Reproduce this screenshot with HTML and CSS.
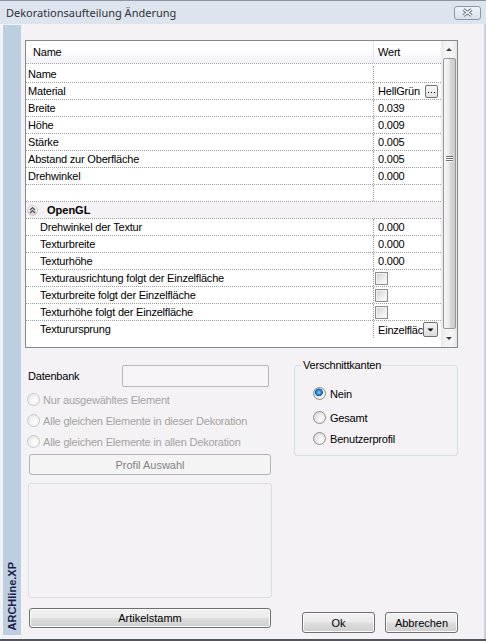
FILE: index.html
```html
<!DOCTYPE html>
<html>
<head>
<meta charset="utf-8">
<title>Dekorationsaufteilung Änderung</title>
<link rel="stylesheet" href="styles.css">
</head>
<body>
<div class="window">
  <div class="titlebar">
    <span class="title">Dekorationsaufteilung Änderung</span>
    <span class="close">
      <svg width="13" height="9" viewBox="0 0 13 9"><path d="M2.5 1.5 L10.5 7.5 M10.5 1.5 L2.5 7.5" stroke="#5b6d82" stroke-width="3.2" fill="none"/><path d="M2.5 1.5 L10.5 7.5 M10.5 1.5 L2.5 7.5" stroke="#ffffff" stroke-width="1.5" fill="none"/></svg>
    </span>
  </div>
  <div class="frame">
    <div class="sidebar"><span class="brand">ARCHline.XP</span></div>
    <div class="content">
      <div class="grid">
        <div class="table">
          <div class="head"><div class="hname">Name</div><div class="hval">Wert</div></div>
          <div class="row"><div class="n">Name</div><div class="v"></div></div>
          <div class="row"><div class="n">Material</div><div class="v btnv"><span class="vt">HellGrün</span><span class="dots"><svg width="11" height="11" viewBox="0 0 11 11"><rect x="2" y="6" width="1" height="1" fill="#000"/><rect x="5" y="6" width="1" height="1" fill="#000"/><rect x="8" y="6" width="1" height="1" fill="#000"/></svg></span></div></div>
          <div class="row"><div class="n">Breite</div><div class="v">0.039</div></div>
          <div class="row"><div class="n">Höhe</div><div class="v">0.009</div></div>
          <div class="row"><div class="n">Stärke</div><div class="v">0.005</div></div>
          <div class="row"><div class="n">Abstand zur Oberfläche</div><div class="v">0.005</div></div>
          <div class="row"><div class="n">Drehwinkel</div><div class="v">0.000</div></div>
          <div class="row"><div class="n"></div><div class="v"></div></div>
          <div class="group">
            <svg class="gicon" width="11" height="11" viewBox="0 0 11 11"><defs><linearGradient id="gg" x1="0" y1="0" x2="0" y2="1"><stop offset="0" stop-color="#fdfdfd"/><stop offset="1" stop-color="#d4d4d4"/></linearGradient></defs><circle cx="5.5" cy="5.5" r="5" fill="url(#gg)" stroke="#d0d0d0" stroke-width="1"/><path d="M3 5 L5.5 2.6 L8 5 M3 8 L5.5 5.6 L8 8" stroke="#505050" stroke-width="1.3" fill="none"/></svg>
            <span>OpenGL</span>
          </div>
          <div class="row sub"><div class="n">Drehwinkel der Textur</div><div class="v">0.000</div></div>
          <div class="row sub"><div class="n">Texturbreite</div><div class="v">0.000</div></div>
          <div class="row sub"><div class="n">Texturhöhe</div><div class="v">0.000</div></div>
          <div class="row sub"><div class="n">Texturausrichtung folgt der Einzelfläche</div><div class="v cbv"><span class="cb"></span></div></div>
          <div class="row sub"><div class="n">Texturbreite folgt der Einzelfläche</div><div class="v cbv"><span class="cb"></span></div></div>
          <div class="row sub"><div class="n">Texturhöhe folgt der Einzelfläche</div><div class="v cbv"><span class="cb"></span></div></div>
          <div class="row sub last"><div class="n">Texturursprung</div><div class="v btnv"><span class="vt">Einzelfläche</span><span class="drop"><svg width="13" height="13" viewBox="0 0 13 13"><path d="M3.5 5.5 L9.5 5.5 L6.5 8.5 Z" fill="#000"/></svg></span></div></div>
        </div>
        <div class="scroll">
          <div class="sarrow"><svg width="16" height="17" viewBox="0 0 16 17"><path d="M5 10 L11 10 L8 7 Z" fill="#3c3c3c"/></svg></div>
          <div class="thumb"><div class="grip"></div></div>
          <div class="sarrow down"><svg width="16" height="18" viewBox="0 0 16 18"><path d="M5 8 L11 8 L8 11 Z" fill="#3c3c3c"/></svg></div>
        </div>
      </div>
      <div class="lower">
        <div class="left">
          <div class="dbrow"><span class="dblabel">Datenbank</span><span class="dbinput"></span></div>
          <div class="radios">
            <div class="rrow dis"><span class="radio off"></span>Nur ausgewähltes Element</div>
            <div class="rrow dis"><span class="radio off"></span>Alle gleichen Elemente in dieser Dekoration</div>
            <div class="rrow dis"><span class="radio off"></span>Alle gleichen Elemente in allen Dekoration</div>
          </div>
          <div class="button disabled wide">Profil Auswahl</div>
          <div class="emptybox"></div>
          <div class="button wide artikel">Artikelstamm</div>
        </div>
        <div class="right">
          <fieldset class="gbox">
            <legend>Verschnittkanten</legend>
            <div class="vlist">
              <div class="rrow"><span class="radio on"></span>Nein</div>
              <div class="rrow gap"><span class="radio"></span>Gesamt</div>
              <div class="rrow"><span class="radio"></span>Benutzerprofil</div>
            </div>
          </fieldset>
          <div class="actions">
            <div class="button small">Ok</div>
            <div class="button small">Abbrechen</div>
          </div>
        </div>
      </div>
    </div>
  </div>
</div>
</body>
</html>
```

FILE: styles.css
```css
* { box-sizing: border-box; }
html, body { margin: 0; padding: 0; }
body {
  width: 486px;
  height: 641px;
  overflow: hidden;
  font-family: "Liberation Sans", Arial, sans-serif;
  font-size: 11px;
  letter-spacing: -0.2px;
  color: #000;
  background: #f5f2f5;
}
.window {
  width: 486px;
  height: 641px;
  display: flex;
  flex-direction: column;
  border-bottom: 2px solid #50565e;
}
.titlebar {
  height: 24px;
  flex: none;
  display: flex;
  align-items: center;
  justify-content: space-between;
  padding: 0 5px 0 6px;
  background: #dce4ed;
  border-top: 1px solid #8a96a4;
}
.title {
  font-family: "Noto Sans", "Open Sans", sans-serif;
  font-size: 11px;
  letter-spacing: 0;
  color: #2e3238;
}
.close {
  width: 27px;
  height: 14px;
  border: 1px solid #8897a8;
  border-radius: 3px;
  background: linear-gradient(#f0f4f8, #d8e0e9);
  display: flex;
  align-items: center;
  justify-content: center;
}
.frame {
  flex: 1;
  display: flex;
  border-right: 2px solid #c4d4e4;
}
.sidebar {
  width: 18px;
  flex: none;
  margin: 1px 0 4px 3px;
  background: #bccfe0;
  display: flex;
  flex-direction: column;
  justify-content: flex-end;
  align-items: center;
  padding-bottom: 5px;
}
.brand {
  writing-mode: vertical-rl;
  transform: rotate(180deg);
  font-weight: bold;
  font-size: 11px;
  letter-spacing: 0;
  color: #1c1d45;
}
.content {
  flex: 1;
  display: flex;
  flex-direction: column;
  padding: 16px 0 0 4px;
}
.grid {
  width: 433px;
  height: 308px;
  flex: none;
  border: 1px solid #828790;
  background: #fff;
  display: flex;
}
.table { width: 415px; }
.head {
  height: 23px;
  display: flex;
  border-bottom: 1px dotted #a0a0a0;
  background: linear-gradient(#ffffff, #ffffff 40%, #f2f1f8);
  margin-bottom: 2px;
}
.hname { width: 347px; padding-left: 7px; line-height: 22px; }
.hval { flex: 1; padding-left: 4px; line-height: 22px; border-left: 1px solid #e4e4ea; }
.row {
  height: 17px;
  display: flex;
  border-bottom: 1px dotted #a0a0a0;
}
.row.last { border-bottom: none; }
.n {
  width: 347px;
  flex: none;
  padding-left: 2px;
  line-height: 16px;
  white-space: nowrap;
  overflow: hidden;
}
.sub .n { padding-left: 14px; }
.v {
  flex: 1;
  min-width: 0;
  border-left: 1px dotted #a0a0a0;
  padding-left: 4px;
  line-height: 16px;
  display: flex;
  align-items: center;
  white-space: nowrap;
  overflow: hidden;
}
.btnv { padding-right: 3px; }
.vt { flex: 1; min-width: 0; overflow: hidden; }
.cbv { padding-left: 1px; }
.cb {
  width: 13px;
  height: 13px;
  border: 1px solid #8e8f8f;
  background: linear-gradient(135deg, #cfcfcf, #f4f4f4 70%, #ffffff);
  box-shadow: inset 0 0 0 1px #f2f2f2;
}
.dots {
  width: 13px;
  height: 13px;
  flex: none;
  border: 1px solid #707070;
  border-radius: 2px;
  background: linear-gradient(#f8f8f8, #e2e2e2);
  display: flex;
}
.drop {
  width: 15px;
  height: 15px;
  flex: none;
  border: 1px solid #707070;
  border-radius: 2px;
  background: linear-gradient(#f4f4f4, #dcdcdc);
  display: flex;
}
.group {
  height: 17px;
  display: flex;
  align-items: center;
  border-bottom: 1px dotted #a0a0a0;
  background: #f5f2f5;
  padding-left: 1px;
  font-weight: bold;
  letter-spacing: 0;
}
.gicon { margin-right: 9px; }
.scroll {
  width: 16px;
  flex: none;
  display: flex;
  flex-direction: column;
  background: linear-gradient(to right, #e9e9e9, #f4f4f4 30%, #f4f4f4 70%, #e6e6e6);
}
.sarrow { height: 17px; flex: none; display: flex; }
.sarrow.down { height: 18px; }
.thumb {
  flex: 1;
  margin: 0 1px 0 2px;
  border: 1px solid #979797;
  border-radius: 2px;
  background: linear-gradient(to right, #f6f6f6, #ececec 45%, #d9d9d9 55%, #cbcbcb);
  padding-top: 97px;
}
.grip {
  width: 7px;
  height: 6px;
  margin-left: 2px;
  background: repeating-linear-gradient(#6f6f6f 0, #6f6f6f 1px, #fafafa 1px, #fafafa 2px);
}
.lower { flex: 1; display: flex; }
.left {
  width: 244px;
  margin-left: 3px;
  padding-top: 17px;
  display: flex;
  flex-direction: column;
}
.dbrow { height: 22px; display: flex; align-items: center; }
.dblabel { width: 94px; }
.dbinput {
  width: 147px;
  height: 22px;
  border: 1px solid #b5b7bc;
  border-radius: 2px;
  background: #f6f4f6;
}
.radios { margin-top: 2px; }
.rrow { height: 21px; display: flex; align-items: center; }
.rrow.dis { color: #a3a3a3; margin-left: -1px; }
.radio {
  width: 13px;
  height: 13px;
  flex: none;
  border-radius: 50%;
  border: 1px solid #8e8f8f;
  background: radial-gradient(circle at 65% 65%, #ffffff, #e4e4e4 60%, #cfcfcf);
  margin-right: 4px;
}
.radio.off {
  border-color: #c8c8c8;
  background: radial-gradient(circle at 65% 65%, #ffffff, #eeeeee 60%, #dedede);
  margin-right: 3px;
}
.radio.on {
  background:
    radial-gradient(circle at 45% 40%, #a6e4ff 0, #3f9be0 1.6px, #0f5ca8 3.6px, rgba(0,0,0,0) 4.2px),
    radial-gradient(circle at 65% 65%, #ffffff, #e4e4e4 60%, #cfcfcf);
}
.button {
  height: 21px;
  border: 1px solid #707070;
  border-radius: 3px;
  background: linear-gradient(#f2f2f2, #ebebeb 48%, #dddddd 52%, #cfcfcf);
  box-shadow: inset 0 0 0 1px #fbfbfb;
  display: flex;
  align-items: center;
  justify-content: center;
  letter-spacing: 0;
}
.button.wide { width: 242px; margin-left: 1px; margin-top: 2px; }
.button.disabled {
  border-color: #b2b5b8;
  background: #f4f4f4;
  box-shadow: none;
  color: #838383;
}
.emptybox {
  height: 115px;
  margin-top: 8px;
  border: 1px solid #d8dfe6;
  border-radius: 3px;
}
.button.artikel { margin-top: 10px; height: 20px; }
.right {
  width: 164px;
  margin-left: 22px;
  display: flex;
  flex-direction: column;
}
.gbox {
  margin: 11px 0 0 0;
  padding: 0;
  border: 1px solid #d5dfe6;
  border-radius: 3px;
  min-width: 0;
}
.gbox legend {
  margin-left: 6px;
  padding: 0 2px;
  line-height: 13px;
}
.vlist { padding: 11px 0 6px 18px; }
.rrow.gap { margin-top: 3px; }
.actions {
  margin-top: auto;
  margin-bottom: 6px;
  display: flex;
  justify-content: flex-end;
  gap: 10px;
}
.button.small { width: 73px; }
```
